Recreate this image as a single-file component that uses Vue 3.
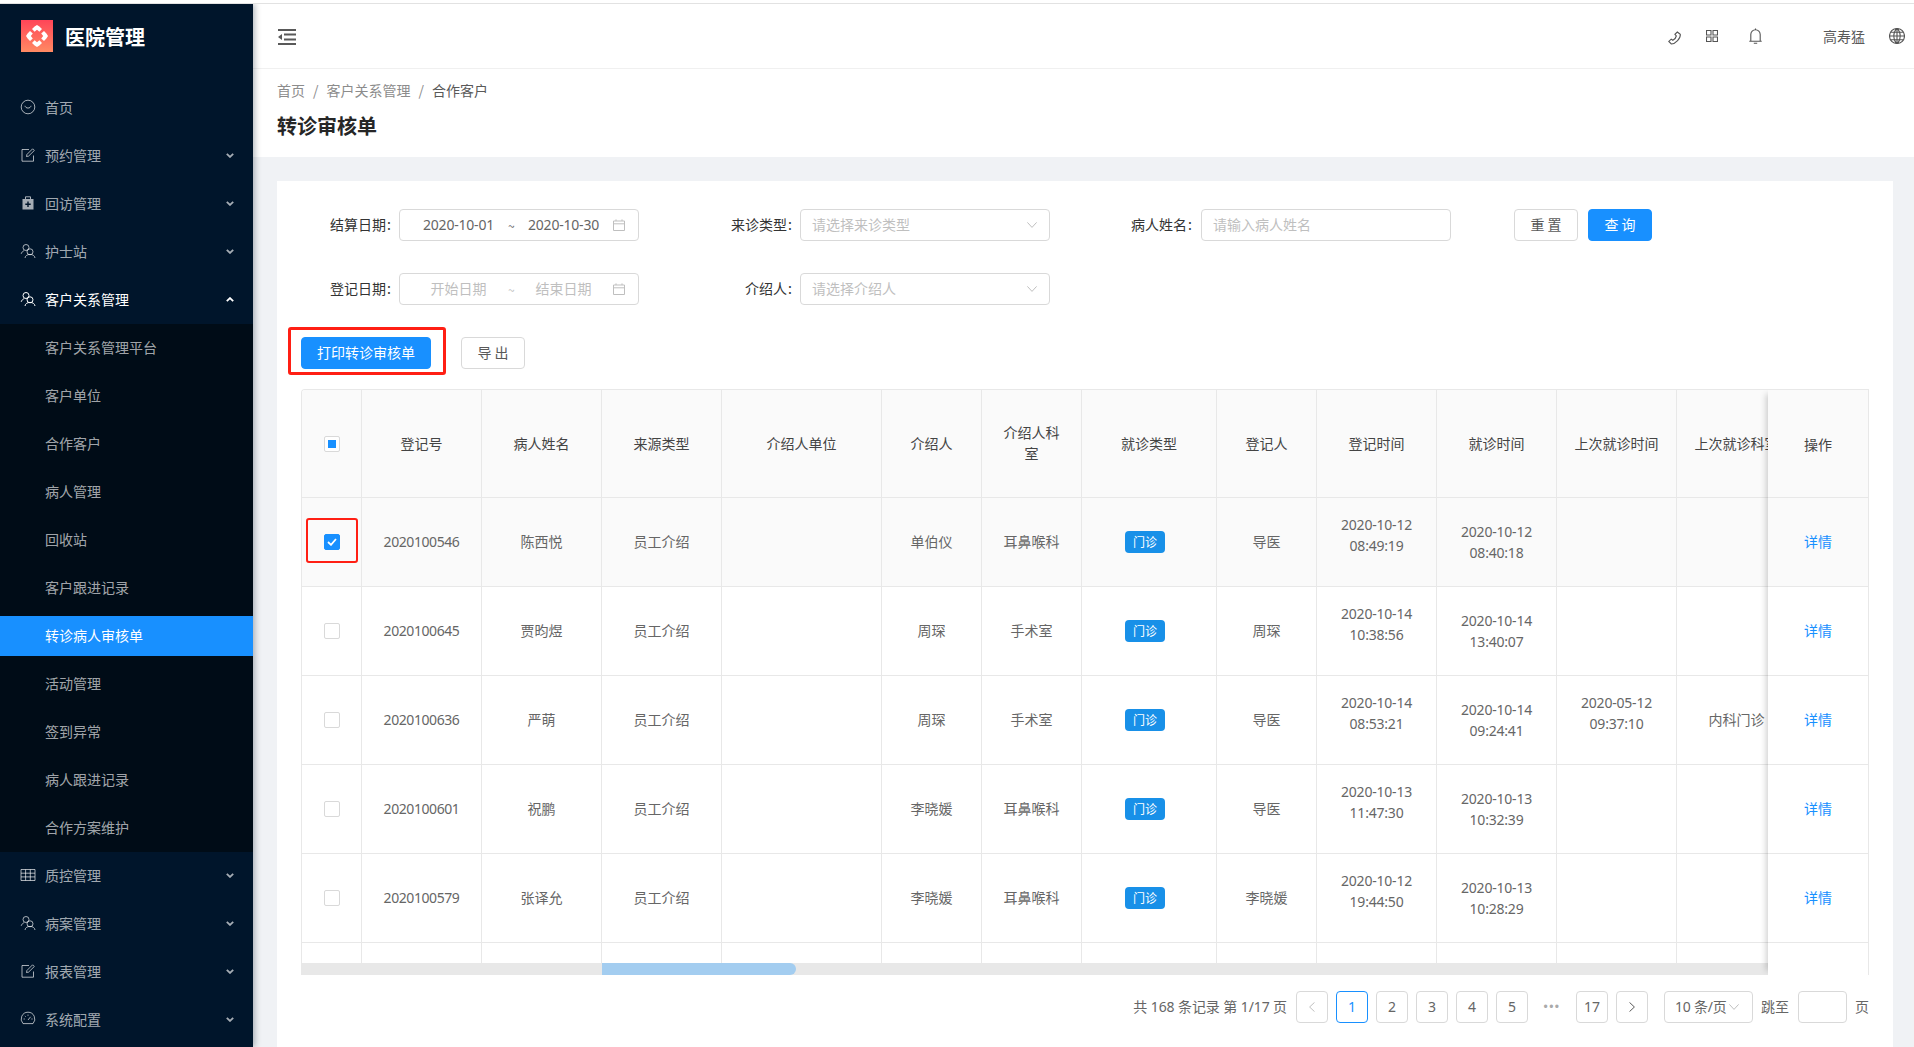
<script setup>
const icons = {
  smile: ['M8 1.200a6.800 6.800 0 1 0 0 13.600A6.800 6.800 0 0 0 8 1.200z', 'M5 6.800c.4 3 5.600 3 6 0'],
  edit: ['M13.500 8.500v5.700H2V2.500h7', 'M6.500 9.500l.4-2L12.600 1.800l1.700 1.700L8.600 9.100z'],
  med: ['M5.500 4V1.800h5V4', 'M2.500 4h11v10.500h-11zM7.300 6.600v2H5.300V10h2v2h1.400v-2h2V8.600h-2v-2z'],
  user: ['M6 1.500a3 3 0 1 0 0 6a3 3 0 0 0 0-6z', 'M1.200 10.800c.5-1.600 1.600-2.600 3-3.200', 'M10 5.800a3 3 0 1 0 0 6a3 3 0 0 0 0-6z', 'M5 15c.3-2.200 2.200-3.600 5-3.600s4.700 1.400 5 3.600'],
  table: ['M1 2.500h14v11H1z', 'M1 6.200h14M1 9.900h14M5.600 2.500v11M10.300 2.500v11'],
  gauge: ['M8 1.200a6.800 6.800 0 0 0-5 11.400h10A6.800 6.800 0 0 0 8 1.200z', 'M8 9l2.600-3.200', 'M3.600 8h1.200M11.400 8h1.200M8 3.600v1.200M4.900 4.900l.8.8']
}
const topMenus = [
  { icon: 'smile', text: '首页' },
  { icon: 'edit', text: '预约管理', arrow: true },
  { icon: 'med', text: '回访管理', arrow: true },
  { icon: 'user', text: '护士站', arrow: true },
  { icon: 'user', text: '客户关系管理', arrow: true, open: true }
]
const subMenus = ['客户关系管理平台', '客户单位', '合作客户', '病人管理', '回收站', '客户跟进记录', '转诊病人审核单', '活动管理', '签到异常', '病人跟进记录', '合作方案维护']
const bottomMenus = [
  { icon: 'table', text: '质控管理', arrow: true },
  { icon: 'user', text: '病案管理', arrow: true },
  { icon: 'edit', text: '报表管理', arrow: true },
  { icon: 'gauge', text: '系统配置', arrow: true }
]
const headers = ['登记号', '病人姓名', '来源类型', '介绍人单位', '介绍人', '介绍人科室', '就诊类型', '登记人', '登记时间', '就诊时间', '上次就诊时间', '上次就诊科室']
const rows = [
  { id: '2020100546', name: '陈西悦', who: '单伯仪', dept: '耳鼻喉科', reg: '导医', t1: ['2020-10-12', '08:49:19'], t2: ['2020-10-12', '08:40:18'], checked: true },
  { id: '2020100645', name: '贾昀煜', who: '周琛', dept: '手术室', reg: '周琛', t1: ['2020-10-14', '10:38:56'], t2: ['2020-10-14', '13:40:07'] },
  { id: '2020100636', name: '严萌', who: '周琛', dept: '手术室', reg: '导医', t1: ['2020-10-14', '08:53:21'], t2: ['2020-10-14', '09:24:41'], t3: ['2020-05-12', '09:37:10'], last: '内科门诊' },
  { id: '2020100601', name: '祝鹏', who: '李晓媛', dept: '耳鼻喉科', reg: '导医', t1: ['2020-10-13', '11:47:30'], t2: ['2020-10-13', '10:32:39'] },
  { id: '2020100579', name: '张译允', who: '李晓媛', dept: '耳鼻喉科', reg: '李晓媛', t1: ['2020-10-12', '19:44:50'], t2: ['2020-10-13', '10:28:29'] }
]
const pages = ['1', '2', '3', '4', '5']
</script>

<template>
  <div class="app">
    <aside class="side">
      <div class="brand">
        <svg class="logo" viewBox="0 0 32 32">
          <defs>
            <linearGradient id="lg" x1="0" y1="0" x2="0" y2="1">
              <stop offset="0" stop-color="#ff4558" />
              <stop offset="1" stop-color="#ff8a63" />
            </linearGradient>
          </defs>
          <rect width="32" height="32" fill="url(#lg)" />
          <g fill="#fff">
            <path d="M16 5l2.400 1.600 2.600 2.400-2.600 2.800-2.400-2-2.400 2L11 9l2.600-2.400z" />
            <path d="M16 27l2.400-1.600L21 23l-2.600-2.800-2.400 2-2.400-2L11 23l2.600 2.400z" />
            <path d="M5 16l1.600 2.400L9 21l2.800-2.600-2-2.400 2-2.400L9 11l-2.400 2.600z" />
            <path d="M27 16l-1.600 2.400L23 21l-2.800-2.600 2-2.400-2-2.400L23 11l2.400 2.600z" />
          </g>
        </svg>
        <span class="brand-name">医院管理</span>
      </div>
      <div v-for="m in topMenus" :key="m.text" class="menu" :class="{ on: m.open }">
        <svg class="mi" :class="{ solidmed: m.icon === 'med' }" viewBox="0 0 16 16"><path v-for="d in icons[m.icon]" :key="d" :d="d" /></svg>
        <span class="mt">{{ m.text }}</span>
        <svg v-if="m.arrow" class="chev" :class="{ up: m.open }" viewBox="0 0 8 5"><path d="M.8.800L4 3.900 7.200.8" /></svg>
      </div>
      <div class="sub">
        <div v-for="s in subMenus" :key="s" class="subitem" :class="{ active: s === '转诊病人审核单' }">{{ s }}</div>
      </div>
      <div v-for="m in bottomMenus" :key="m.text" class="menu">
        <svg class="mi" viewBox="0 0 16 16"><path v-for="d in icons[m.icon]" :key="d" :d="d" /></svg>
        <span class="mt">{{ m.text }}</span>
        <svg class="chev" viewBox="0 0 8 5"><path d="M.8.800L4 3.900 7.200.8" /></svg>
      </div>
    </aside>

    <main class="main">
      <header class="bar">
        <svg class="fold" viewBox="0 0 18 16">
          <path d="M0 1h18M6 5.500h12M6 10.500h12M0 15h18" />
          <path class="solid" d="M4 5v6L0 8z" />
        </svg>
        <div class="tools">
          <svg class="t-phone" viewBox="0 0 14 14"><path d="M9.300 1l3 2.400c.5 3.800-4.800 9.700-9 9.600L.8 10.400l2.400-2.300 1.700 1.200c1.400-.7 3-2.600 3.400-4.300L6.900 3.300z" /></svg>
          <svg class="t-app" viewBox="0 0 12 12"><path d="M.5.500h4.500v4.500H.5zM7 .5h4.500v4.500H7zM.5 7h4.500v4.500H.5zM7 7h4.500v4.500H7z" /></svg>
          <svg class="t-bell" viewBox="0 0 13 16"><path d="M.3 13.200h12.400M1.800 13.200V6.500a4.700 4.700 0 0 1 9.400 0v6.700M6.500 1.800V.4M4.800 15.200h3.400" /></svg>
          <span class="uname">高寿猛</span>
          <svg class="t-globe" viewBox="0 0 16 16"><path d="M8 .5a7.500 7.500 0 1 0 0 15A7.500 7.500 0 0 0 8 .5zM.5 8h15M1.500 4.300h13M1.500 11.700h13M8 .5v15M8 .5C3.800 4 3.800 12 8 15.500M8 .5c4.200 3.500 4.200 11.500 0 15" /></svg>
        </div>
      </header>

      <section class="pagehead">
        <div class="crumb">首页<i>/</i>客户关系管理<i>/</i><b>合作客户</b></div>
        <h1>转诊审核单</h1>
      </section>

      <section class="content">
        <div class="card">
          <div class="form-row">
            <label class="l1">结算日期<em>:</em></label>
            <div class="ctl date">
              <span class="d num">2020-10-01</span><span class="tilde">~</span><span class="d num">2020-10-30</span>
              <svg class="cal" viewBox="0 0 12 12"><path d="M.5 2h11v9.500H.5zM.5 4.800h11M3 .4V2M9 .4V2" /></svg>
            </div>
            <label class="l2">来诊类型<em>:</em></label>
            <div class="ctl pick ph"><span class="tx">请选择来诊类型</span>
              <svg class="dn" viewBox="0 0 10 6"><path d="M.4.400L5 5.400 9.600.4" /></svg>
            </div>
            <label class="l3">病人姓名<em>:</em></label>
            <div class="ctl inp ph"><span class="tx">请输入病人姓名</span></div>
            <button class="btn reset">重 置</button>
            <button class="btn primary query">查 询</button>
          </div>
          <div class="form-row">
            <label class="l1">登记日期<em>:</em></label>
            <div class="ctl date ph">
              <span class="d">开始日期</span><span class="tilde">~</span><span class="d">结束日期</span>
              <svg class="cal" viewBox="0 0 12 12"><path d="M.5 2h11v9.500H.5zM.5 4.800h11M3 .4V2M9 .4V2" /></svg>
            </div>
            <label class="l2">介绍人<em>:</em></label>
            <div class="ctl pick ph"><span class="tx">请选择介绍人</span>
              <svg class="dn" viewBox="0 0 10 6"><path d="M.4.400L5 5.400 9.600.4" /></svg>
            </div>
          </div>
          <div class="actions">
            <button class="btn primary print">打印转诊审核单<span class="redbox"></span></button>
            <button class="btn export">导 出</button>
          </div>

          <div class="table">
            <div class="tr th">
              <div class="td"><span class="cb half"></span></div>
              <div v-for="h in headers" :key="h" class="td" :class="{ nowrap: h === '上次就诊科室', twoline: h === '介绍人科室' }">{{ h }}</div>
            </div>
            <div v-for="r in rows" :key="r.id" class="tr" :class="{ picked: r.checked }">
              <div class="td">
                <span v-if="r.checked" class="cb on">
                  <svg viewBox="0 0 10 8"><path d="M1 4l3 2.800L9 1" /></svg>
                </span>
                <span v-else class="cb"></span>
                <span v-if="r.checked" class="redbox cellbox"></span>
              </div>
              <div class="td idn">{{ r.id }}</div>
              <div class="td">{{ r.name }}</div>
              <div class="td">员工介绍</div>
              <div class="td"></div>
              <div class="td">{{ r.who }}</div>
              <div class="td">{{ r.dept }}</div>
              <div class="td"><span class="tag">门诊</span></div>
              <div class="td">{{ r.reg }}</div>
              <div class="td num"><div class="raised">{{ r.t1[0] }}<br />{{ r.t1[1] }}</div></div>
              <div class="td num"><div class="plain">{{ r.t2[0] }}<br />{{ r.t2[1] }}</div></div>
              <div class="td num"><div v-if="r.t3" class="raised">{{ r.t3[0] }}<br />{{ r.t3[1] }}</div></div>
              <div class="td nowrap">{{ r.last }}</div>
            </div>
            <div class="tr stub">
              <div v-for="n in 13" :key="n" class="td"></div>
            </div>
            <div class="scroll"><div class="thumb"></div></div>
            <div class="fixed">
              <div class="fx fh">操作</div>
              <div v-for="r in rows" :key="r.id" class="fx" :class="{ picked: r.checked }"><a>详情</a></div>
              <div class="fx fs"></div>
            </div>
          </div>

          <div class="pager">
            <span class="total num2">共 168 条记录 第 1/17 页</span>
            <span class="pg arrow dim"><svg viewBox="0 0 6 10"><path d="M5.500.4L.6 5l4.900 4.600" /></svg></span>
            <span v-for="p in pages" :key="p" class="pg num2" :class="{ cur: p === '1' }">{{ p }}</span>
            <span class="dots">•••</span>
            <span class="pg num2">17</span>
            <span class="pg arrow"><svg viewBox="0 0 6 10"><path d="M.5.4L5.400 5 .5 9.600" /></svg></span>
            <span class="size num2">10 条/页<svg class="dn2" viewBox="0 0 10 6"><path d="M.4.400L5 5.400 9.600.4" /></svg></span>
            <span class="jump">跳至</span>
            <span class="jumpbox"></span>
            <span class="unit">页</span>
          </div>
        </div>
      </section>
    </main>
  </div>
</template>

<style scoped>
.app {
  display: flex;
  height: 1043px;
  border-top: 1px solid #e2e2e2;
  margin-top: 3px;
  overflow: hidden;
  font-family: "Noto Sans CJK SC", "Noto Sans", sans-serif;
  font-size: 14px;
  color: #666;
  background: #fff;
}
.side {
  flex: 0 0 253px;
  position: relative;
  z-index: 2;
  background: #00152b;
  box-shadow: 2px 0 6px rgba(0, 21, 41, .3);
  color: rgba(255, 255, 255, .65);
}
.brand {
  height: 84px;
  display: flex;
  align-items: center;
  padding-left: 21px;
  box-sizing: border-box;
  padding-bottom: 20px;
}
.logo { width: 32px; height: 32px; display: block; }
.brand-name { margin-left: 12px; font-size: 20px; font-weight: 700; color: #fff; }
.menu {
  height: 40px;
  box-sizing: border-box;
  margin-bottom: 8px;
  display: flex;
  align-items: center;
  padding: 0 19px 2px 20px;
}
.menu.on { color: #fff; }
.mi {
  width: 16px;
  height: 16px;
  margin-right: 9px;
  fill: none;
  stroke: currentColor;
  stroke-width: 1;
}
.solidmed { fill-rule: evenodd; }
.solidmed path:last-child { fill: currentColor; stroke: none; }
.mt { flex: 1; }
.chev { width: 8px; height: 5px; fill: none; stroke: currentColor; stroke-width: 1.8; }
.chev.up { transform: rotate(180deg); }
.sub { background: #000c17; padding: 4px 0; margin-top: -4px; margin-bottom: 4px; }
.subitem {
  height: 40px;
  line-height: 38px;
  margin-bottom: 8px;
  padding-left: 45px;
}
.subitem:last-child { margin-bottom: 0; }
.subitem.active { background: #1890ff; color: #fff; }

.main { flex: 1; min-width: 0; display: flex; flex-direction: column; }
.bar {
  height: 65px;
  flex: none;
  box-sizing: border-box;
  display: flex;
  align-items: center;
  padding-left: 25px;
  border-bottom: 1px solid #f0f0f0;
}
.fold { width: 18px; height: 16px; margin-top: 2px; fill: none; stroke: #595959; stroke-width: 1.8; }
.fold .solid { fill: #595959; stroke: none; }
.tools { margin-left: auto; display: flex; align-items: center; padding-right: 9px; color: #595959; }
.tools svg { fill: none; stroke: #555; stroke-width: 1.1; display: block; }
.t-phone { width: 14px; height: 14px; margin-top: 3px; }
.t-app { width: 12px; height: 12px; margin-left: 24px; margin-top: -1px; }
.t-bell { width: 13px; height: 16px; margin-left: 31px; }
.uname { margin-left: 61px; }
.t-globe { width: 16px; height: 16px; margin-left: 24px; }

.pagehead { height: 88px; flex: none; box-sizing: border-box; padding: 11px 24px 0; }
.crumb { line-height: 20px; color: #8c8c8c; }
.crumb i { font-style: normal; margin: 0 8px; }
.crumb b { font-weight: 400; color: #595959; }
h1 { margin: 12px 0 0; font-size: 20px; line-height: 28px; font-weight: 600; color: #262626; }

.content { flex: 1; background: #f0f2f5; padding: 24px 21px 0 24px; min-height: 0; }
.card { height: 100%; background: #fff; padding-top: 28px; box-sizing: border-box; }
.form-row { display: flex; height: 32px; margin-bottom: 32px; }
label { line-height: 30px; text-align: right; color: #333; margin-right: 8px; white-space: nowrap; }
label em { font-style: normal; margin-left: 1px; }
.l1 { width: 114px; }
.l2 { width: 153px; }
.l3 { width: 142px; margin-right: 9px; }
.ctl {
  box-sizing: border-box;
  height: 32px;
  border: 1px solid #d9d9d9;
  border-radius: 4px;
  display: flex;
  align-items: center;
}
.tx { margin-top: -2px; }
.ph { color: #bfbfbf; }
.date { width: 240px; padding: 0 13px 0 9px; color: #666; }
.date.ph { color: #bfbfbf; }
.d { width: 99px; text-align: center; margin-top: -2px; }
.tilde { width: 6px; text-align: center; font-size: 12px; }
.cal { width: 12px; height: 12px; fill: none; stroke: #bfbfbf; stroke-width: 1; margin-left: 0; }
.pick { width: 250px; padding: 0 12px 0 11px; justify-content: space-between; }
.dn { width: 10px; height: 6px; fill: none; stroke: #bfbfbf; stroke-width: 1; }
.inp { width: 250px; padding-left: 11px; }
.btn {
  box-sizing: border-box;
  height: 32px;
  border: 1px solid #d9d9d9;
  border-radius: 4px;
  background: #fff;
  color: #595959;
  font: inherit;
  padding: 0 0 2px;
}
.btn.primary { background: #1890ff; border-color: #1890ff; color: #fff; }
.reset { width: 64px; margin-left: 63px; }
.query { width: 64px; margin-left: 10px; }
.actions { display: flex; padding-left: 24px; margin-bottom: 20px; }
.print { width: 130px; position: relative; }
.export { width: 64px; margin-left: 30px; }
.redbox {
  position: absolute;
  inset: -11px -16px -7px -14px;
  border: 3px solid #ff1f14;
  border-radius: 3px;
  pointer-events: none;
}
.table {
  position: relative;
  margin-left: 24px;
  width: 1568px;
  height: 586px;
  box-sizing: border-box;
  overflow: hidden;
  border-top: 1px solid #e8e8e8;
  border-left: 1px solid #e8e8e8;
  border-top-left-radius: 4px;
}
.tr {
  display: grid;
  grid-template-columns: 60px 120px 120px 120px 160px 100px 100px 135px 100px 120px 120px 120px 120px;
  width: 1495px;
  height: 89px;
  box-sizing: border-box;
  border-bottom: 1px solid #e8e8e8;
}
.th { height: 108px; background: #fafafa; color: #444; }
.tr.picked { background: #fafafa; }
.td {
  position: relative;
  box-sizing: border-box;
  border-right: 1px solid #e8e8e8;
  padding: 0 16px 2px;
  display: flex;
  align-items: center;
  justify-content: center;
  text-align: center;
  line-height: 21px;
}
.th .td { padding-bottom: 0; }
.th .td.twoline { padding-bottom: 2px; }
.th .cb { margin-top: 0; }
.stub { height: 20px; border-bottom: 0; }
.nowrap { white-space: nowrap; padding: 0 0 2px; }
.num { font-family: "Noto Sans", sans-serif; letter-spacing: -.2px; white-space: nowrap; }
.idn { font-family: "Noto Sans", sans-serif; letter-spacing: -.42px; white-space: nowrap; }
.raised { margin-bottom: 12px; }
.plain { margin-top: 2px; }
.cb {
  flex: none;
  box-sizing: border-box;
  width: 16px;
  height: 16px;
  margin-top: 2px;
  border: 1px solid #d9d9d9;
  border-radius: 2px;
  background: #fff;
  display: flex;
  align-items: center;
  justify-content: center;
}
.cb.half::after { content: ""; width: 8px; height: 8px; background: #1890ff; }
.cb.on { background: #1890ff; border-color: #1890ff; }
.cb.on svg { width: 10px; height: 8px; fill: none; stroke: #fff; stroke-width: 1.8; }
.cellbox { inset: 20px 3px 23px 4px; border-width: 2.500px; }
.tag {
  display: block;
  width: 40px;
  height: 22px;
  margin: 2px 8px 0 0;
  border-radius: 4px;
  background: #1890e8;
  color: #fff;
  font-size: 12px;
  line-height: 21px;
}
.scroll { height: 12px; background: #e8e8e8; }
.thumb { width: 194px; height: 12px; margin-left: 300px; background: #a3cdf0; border-radius: 0 6px 6px 0; }
.fixed {
  position: absolute;
  top: 0;
  right: 0;
  width: 101px;
  height: 585px;
  background: #fff;
  border-right: 1px solid #e8e8e8;
  box-sizing: border-box;
  box-shadow: -6px 0 6px -4px rgba(0, 0, 0, .18);
}
.fx {
  height: 89px;
  box-sizing: border-box;
  border-bottom: 1px solid #e8e8e8;
  display: flex;
  align-items: center;
  justify-content: center;
  padding-bottom: 2px;
}
.fx.picked { background: #fafafa; }
.fx.fh { height: 108px; background: #fafafa; color: #444; padding-bottom: 0; }
.fs { height: 32px; border-bottom: 0; }
.fx a { color: #1890ff; }
.pager { display: flex; align-items: center; justify-content: flex-end; height: 32px; margin: 16px 24px 0 0; color: #666; }
.num2 { font-family: "Noto Sans", "Noto Sans CJK SC", sans-serif; }
.total { margin-right: 9px; white-space: nowrap; letter-spacing: -.1px; padding-bottom: 2px; }
.pg {
  box-sizing: border-box;
  width: 32px;
  height: 32px;
  margin-right: 8px;
  padding-bottom: 2px;
  border: 1px solid #d9d9d9;
  border-radius: 4px;
  display: flex;
  align-items: center;
  justify-content: center;
}
.pg.cur { border-color: #1890ff; color: #1890ff; }
.pg.arrow { padding-bottom: 0; }
.pg.arrow svg { width: 6px; height: 10px; fill: none; stroke: #595959; stroke-width: 1; }
.pg.dim svg { stroke: #bfbfbf; }
.dots { width: 32px; margin-right: 8px; text-align: center; color: #aaa; font-size: 12px; letter-spacing: 1.5px; font-family: "Liberation Sans", sans-serif; }
.size {
  box-sizing: border-box;
  width: 89px;
  height: 32px;
  margin-left: 8px;
  padding: 0 0 2px 10px;
  border: 1px solid #d9d9d9;
  border-radius: 4px;
  display: flex;
  align-items: center;
  white-space: nowrap;
  letter-spacing: -.2px;
}
.dn2 { width: 10px; height: 6px; fill: none; stroke: #bfbfbf; stroke-width: 1; margin: 2px 0 0 2px; flex: none; }
.jump { margin-left: 8px; padding-bottom: 2px; }
.jumpbox { box-sizing: border-box; width: 49px; height: 32px; margin: 0 8px 0 9px; border: 1px solid #d9d9d9; border-radius: 4px; }
.unit { width: 14px; padding-bottom: 2px; }
</style>

<style>
html, body { margin: 0; background: #fff; }
</style>
